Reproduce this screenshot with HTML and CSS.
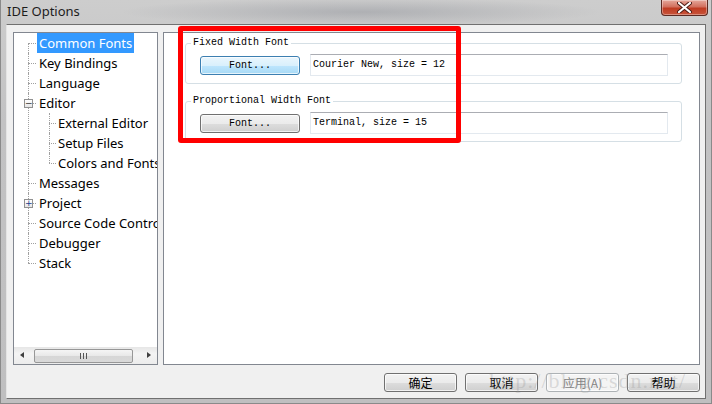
FILE: index.html
```html
<!DOCTYPE html>
<html lang="en">
<head>
    <meta charset="UTF-8">
    <title>IDE Options</title>
    <link rel="stylesheet" href="styles.css">
</head>
<body>
    <div class="window">
        <div class="titlebar">
            <span class="title">IDE Options</span>
            <div class="close-btn">
                <svg width="15" height="11" viewBox="0 0 15 11">
                    <path d="M2 1 L13 10 M13 1 L2 10" stroke="#4a1a14" stroke-width="4" stroke-linecap="round"/>
                    <path d="M2 1 L13 10 M13 1 L2 10" stroke="#ffffff" stroke-width="2.2" stroke-linecap="round"/>
                </svg>
            </div>
        </div>

        <div class="client">
            <div class="main">
                <div class="tree-box">
                    <ul class="tree">
                        <li class="first"><span class="label selected">Common Fonts</span></li>
                        <li><span class="label">Key Bindings</span></li>
                        <li><span class="label">Language</span></li>
                        <li class="open">
                            <span class="toggle">&minus;</span><span class="label">Editor</span>
                            <ul>
                                <li><span class="label">External Editor</span></li>
                                <li><span class="label">Setup Files</span></li>
                                <li class="last"><span class="label">Colors and Fonts</span></li>
                            </ul>
                        </li>
                        <li><span class="label">Messages</span></li>
                        <li><span class="toggle plus">+</span><span class="label">Project</span></li>
                        <li><span class="label">Source Code Control</span></li>
                        <li><span class="label">Debugger</span></li>
                        <li class="last"><span class="label">Stack</span></li>
                    </ul>
                    <div class="hscroll">
                        <span class="arrow left"></span>
                        <div class="track">
                            <div class="thumb"><span class="grip"></span></div>
                        </div>
                        <span class="arrow right"></span>
                    </div>
                </div>

                <div class="panel">
                    <fieldset class="group">
                        <legend>Fixed Width Font</legend>
                        <div class="group-row">
                            <button class="font-btn focused">Font...</button>
                            <div class="textbox">Courier New, size = 12</div>
                        </div>
                    </fieldset>
                    <fieldset class="group">
                        <legend>Proportional Width Font</legend>
                        <div class="group-row">
                            <button class="font-btn">Font...</button>
                            <div class="textbox">Terminal, size = 15</div>
                        </div>
                    </fieldset>
                </div>
            </div>

            <div class="dialog-buttons">
                <button class="dlg-btn">确定</button>
                <button class="dlg-btn">取消</button>
                <button class="dlg-btn" disabled>应用(A)</button>
                <button class="dlg-btn">帮助</button>
            </div>
        </div>

        <!-- annotation + watermark drawn on top of the screenshot -->
        <div class="annot-box"></div>
        <div class="watermark">http://blog.csdn.net/</div>
    </div>
</body>
</html>
```

FILE: styles.css
```css
body {
    margin: 0;
    background: #c4c4c4;
    font-family: 'Noto Sans', 'Liberation Sans', sans-serif;
}

.window {
    position: relative;
    width: 712px;
    height: 404px;
    box-sizing: border-box;
    display: flex;
    flex-direction: column;
    background:
        radial-gradient(ellipse 240px 14px at 360px 12px, rgba(120,124,134,0.35), rgba(120,124,134,0)),
        linear-gradient(to bottom, #cdcdcd 0%, #c2c2c3 30%, #bfbfc0 100%);
    border: 1px solid #8a8a8a;
    border-top: none;
}

.titlebar {
    height: 24px;
    display: flex;
    align-items: flex-start;
    justify-content: space-between;
    flex-shrink: 0;
}

.title {
    font-family: 'Noto Sans', sans-serif;
    font-size: 13px;
    color: #1c1c1c;
    padding: 2px 0 0 6px;
    line-height: 18px;
}

.close-btn {
    width: 45px;
    height: 15px;
    margin-right: 3px;
    border: 1px solid #5c2a22;
    border-top: none;
    border-radius: 0 0 4px 4px;
    background: linear-gradient(to bottom, #e5a79b 0%, #d2705e 45%, #bf3b22 55%, #c8543a 100%);
    box-shadow: inset 0 0 0 1px rgba(255,255,255,0.35);
    display: flex;
    align-items: center;
    justify-content: center;
}

.client {
    flex: 1;
    margin: 0 5px 5px 5px;
    background: #f0f0f0;
    border: 1px solid #707070;
    border-left-color: #e4e4e4;
    display: flex;
    flex-direction: column;
    padding: 7px 5px 6px 6px;
}

.main {
    display: flex;
    gap: 5px;
    height: 333px;
}

/* tree */

.tree-box {
    width: 145px;
    box-sizing: border-box;
    border: 1px solid #828790;
    background: white;
    display: flex;
    flex-direction: column;
    overflow: hidden;
}

.tree {
    flex: 1;
    list-style: none;
    margin: 0;
    padding: 0;
    white-space: nowrap;
    overflow: hidden;
}

.tree ul {
    list-style: none;
    margin: 0 0 0 -23px;
    padding: 0 0 0 19px;
}

.tree li {
    position: relative;
    line-height: 20px;
    padding-left: 23px;
    font-size: 13px;
    color: #000;
}

.tree li::before {
    content: "";
    position: absolute;
    left: 14px;
    top: 0;
    bottom: 0;
    border-left: 1px dotted #a0a0a0;
}

.tree ul li::before {
    left: 16px;
}

.tree li.first::before {
    top: 10px;
}

.tree li.last::before {
    bottom: auto;
    height: 10px;
}

.tree li::after {
    content: "";
    position: absolute;
    left: 14px;
    top: 10px;
    width: 8px;
    border-top: 1px dotted #a0a0a0;
}

.tree ul li::after {
    left: 16px;
    width: 7px;
}

.label {
    display: inline-block;
    padding: 0 2px;
    height: 20px;
}

.label.selected {
    background: #3399ff;
    color: white;
}

.toggle {
    position: absolute;
    left: 10px;
    top: 6px;
    z-index: 1;
    width: 7px;
    height: 7px;
    border: 1px solid #919191;
    background: linear-gradient(to bottom, #ffffff, #e6e6e6);
    font-size: 9px;
    line-height: 7px;
    text-align: center;
    color: #333;
    font-family: 'DejaVu Sans', sans-serif;
}

.toggle.plus {
    color: #1e3c8c;
}

.hscroll {
    height: 17px;
    flex-shrink: 0;
    display: flex;
    align-items: center;
    background: linear-gradient(to bottom, #e6e6e6, #f4f4f4 40%, #ececec);
}

.arrow {
    width: 17px;
    height: 17px;
    position: relative;
}

.arrow.left::after,
.arrow.right::after {
    content: "";
    position: absolute;
    top: 5px;
    border-top: 3px solid transparent;
    border-bottom: 3px solid transparent;
}

.arrow.left::after {
    left: 6px;
    border-right: 4px solid #404040;
}

.arrow.right::after {
    left: 7px;
    border-left: 4px solid #404040;
}

.track {
    flex: 1;
    height: 17px;
    display: flex;
    align-items: center;
}

.thumb {
    width: 99px;
    height: 14px;
    box-sizing: border-box;
    margin-left: 3px;
    border: 1px solid #979797;
    border-radius: 2px;
    background: linear-gradient(to bottom, #f5f5f5 0%, #e8e8e8 50%, #d6d6d6 51%, #d9d9d9 100%);
    display: flex;
    align-items: center;
    justify-content: center;
}

.grip {
    width: 7px;
    height: 6px;
    background: repeating-linear-gradient(to right, #555 0 1px, transparent 1px 3px);
}

/* right panel */

.panel {
    flex: 1;
    box-sizing: border-box;
    border: 1px solid #828790;
    background: white;
    padding: 4px 17px 0 21px;
    display: flex;
    flex-direction: column;
    gap: 11px;
}

.group {
    margin: 0;
    min-width: 0;
    border: 1px solid #d5dfe5;
    border-radius: 3px;
    padding: 5px 13px 7px 14px;
}

.group legend {
    font-family: 'Liberation Mono', monospace;
    font-size: 10px;
    line-height: 12px;
    padding: 0 2px;
    margin-left: -9px;
    color: #000;
}

.group-row {
    display: flex;
    align-items: center;
    gap: 10px;
}

.font-btn {
    width: 100px;
    height: 19px;
    box-sizing: border-box;
    padding: 0;
    border: 1px solid #707070;
    border-radius: 3px;
    background: linear-gradient(to bottom, #f2f2f2 0%, #ebebeb 50%, #dddddd 51%, #cfcfcf 100%);
    box-shadow: inset 0 0 0 1px rgba(255,255,255,0.7);
    font-family: 'Liberation Mono', monospace;
    font-size: 10px;
    color: #000;
}

.font-btn.focused {
    border-color: #3c7fb1;
    background: linear-gradient(to bottom, #eaf6fd 0%, #d9f0fc 50%, #bee6fd 51%, #a7d9f5 100%);
}

.textbox {
    flex: 1;
    height: 22px;
    box-sizing: border-box;
    border: 1px solid #e3e9ef;
    border-top-color: #abadb3;
    padding: 0 2px;
    font-family: 'Liberation Mono', monospace;
    font-size: 10px;
    line-height: 19px;
    color: #000;
    background: white;
}

/* bottom buttons */

.dialog-buttons {
    margin-top: 8px;
    display: flex;
    justify-content: flex-end;
    gap: 8px;
}

.dlg-btn {
    width: 73px;
    height: 19px;
    box-sizing: border-box;
    padding: 0;
    border: 1px solid #707070;
    border-radius: 3px;
    background: linear-gradient(to bottom, #f2f2f2 0%, #ebebeb 50%, #dddddd 51%, #cfcfcf 100%);
    box-shadow: inset 0 0 0 1px rgba(255,255,255,0.7);
    font-family: 'Noto Sans CJK SC', sans-serif;
    font-size: 12px;
    line-height: 16px;
    color: #000;
}

.dlg-btn:disabled {
    border-color: #adb2b5;
    background: #f4f4f4;
    color: #838383;
}

/* overlays */

.annot-box {
    position: absolute;
    left: 177px;
    top: 26px;
    width: 283px;
    height: 117px;
    box-sizing: border-box;
    border: 5px solid #ff0000;
    border-radius: 3px;
    pointer-events: none;
}

.watermark {
    position: absolute;
    left: 488px;
    top: 368px;
    font-family: 'Liberation Serif', serif;
    font-size: 22px;
    letter-spacing: 1px;
    color: rgba(150, 150, 150, 0.3);
    pointer-events: none;
}
```
